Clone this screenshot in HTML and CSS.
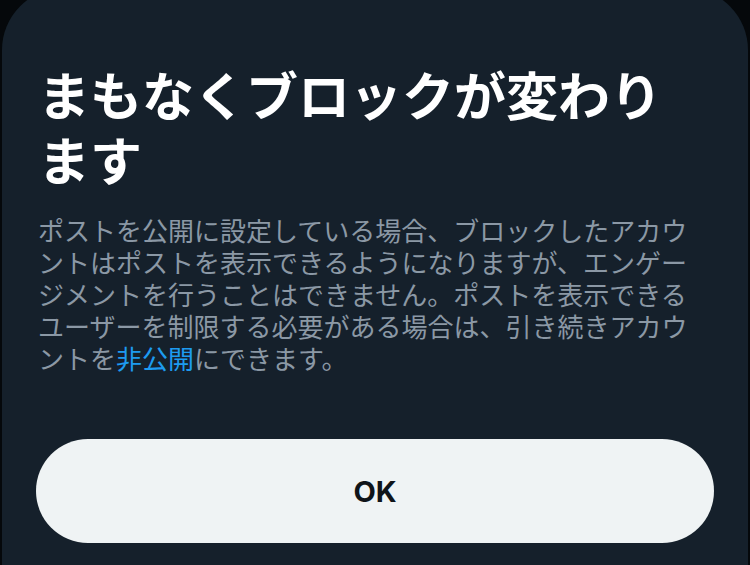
FILE: index.html
```html
<!DOCTYPE html>
<html lang="ja">
<head>
<meta charset="utf-8">
<link rel="stylesheet" href="styles.css">
</head>
<body>
<div class="sheet">
  <h1 class="title">まもなくブロックが変わります</h1>
  <p class="body">ポストを公開に設定している場合、ブロックしたアカウントはポストを表示できるようになりますが、エンゲージメントを行うことはできません。ポストを表示できるユーザーを制限する必要がある場合は、引き続きアカウントを<span class="link">非公開</span>にできます。</p>
  <button class="ok">OK</button>
</div>
</body>
</html>
```

FILE: styles.css
```css
html, body {
  margin: 0;
  padding: 0;
  background: #05080b;
  height: 100%;
  overflow: hidden;
}
.sheet {
  margin: -12px 2px 0;
  background: #15202b;
  border-radius: 62px 62px 0 0;
  height: calc(100% + 12px);
  padding: 73px 36px 0;
  box-sizing: border-box;
  font-family: "Noto Sans CJK JP", "Noto Sans", sans-serif;
}
.title {
  margin: 0;
  color: #ffffff;
  font-size: 52px;
  line-height: 65px;
  font-weight: 700;
  width: 650px;
}
.body {
  margin: 23px 0 0;
  color: #8b98a5;
  font-size: 26px;
  line-height: 32px;
  font-weight: 400;
  width: 662px;
}
.link {
  color: #1d9bf0;
}
.ok {
  display: block;
  margin: 65px 0 0 -2px;
  width: 678px;
  height: 104px;
  border: none;
  border-radius: 52px;
  background: #eff3f4;
  color: #0f1419;
  font-family: "Inter", "Noto Sans", sans-serif;
  font-size: 29px;
  font-weight: 700;
}
```
